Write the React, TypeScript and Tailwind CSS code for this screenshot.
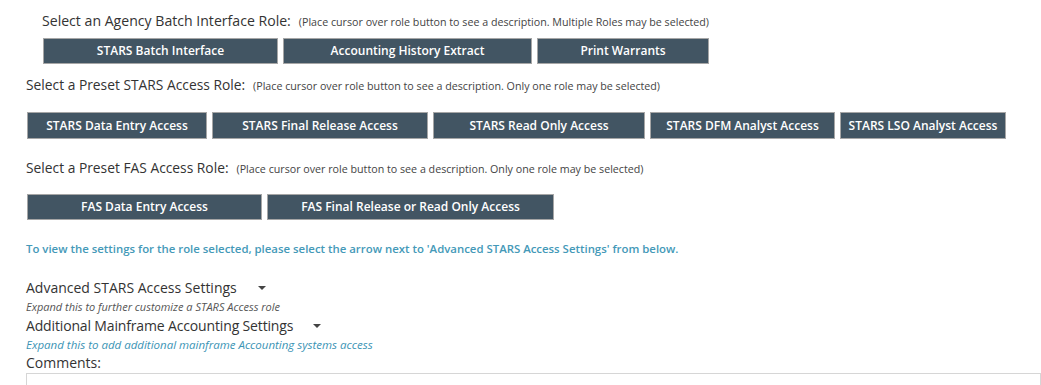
import React from "react";

const font = { fontFamily: '"Open Sans", "Noto Sans", sans-serif' };

function Btn({ label, w }: { label: string; w: string }) {
  return (
    <div
      className={`${w} h-full flex items-center justify-center bg-[#425563] border border-[#a6a6a6] text-white text-[12px] font-semibold`}
    >
      {label}
    </div>
  );
}

function Arrow() {
  return (
    <svg width="8" height="4" viewBox="0 0 8 4" className="inline-block">
      <path d="M0 0 L8 0 L4 4 Z" fill="#444" />
    </svg>
  );
}

function Heading({ title, note, pl, mt, size }: { title: string; note: string; pl: string; mt: string; size: string }) {
  return (
    <div className={`${pl} ${mt} h-[18px] flex items-baseline`}>
      <span className={`${size} leading-[18px]`}>{title}</span>
      <span className="text-[10.7px] leading-[18px] ml-[8px] text-[#444]">{note}</span>
    </div>
  );
}

export default function App() {
  return (
    <div className="w-[1041px] h-[385px] bg-white overflow-hidden text-[#333]" style={font}>
      <Heading
        pl="pl-[42px]"
        mt="mt-[12px]"
        size="text-[14.1px]"
        title="Select an Agency Batch Interface Role:"
        note="(Place cursor over role button to see a description. Multiple Roles may be selected)"
      />
      <div className="mt-[8px] ml-[43px] h-[26px] flex gap-[5px]">
        <Btn label="STARS Batch Interface" w="w-[235px]" />
        <Btn label="Accounting History Extract" w="w-[249px]" />
        <Btn label="Print Warrants" w="w-[172px]" />
      </div>
      <Heading
        pl="pl-[26px]"
        mt="mt-[12px]"
        size="text-[13.8px]"
        title="Select a Preset STARS Access Role:"
        note="(Place cursor over role button to see a description. Only one role may be selected)"
      />
      <div className="mt-[18px] ml-[27px] h-[27px] flex gap-[5px]">
        <Btn label="STARS Data Entry Access" w="w-[180px]" />
        <Btn label="STARS Final Release Access" w="w-[216px]" />
        <Btn label="STARS Read Only Access" w="w-[212px]" />
        <Btn label="STARS DFM Analyst Access" w="w-[185px]" />
        <Btn label="STARS LSO Analyst Access" w="w-[166px]" />
      </div>
      <Heading
        pl="pl-[26px]"
        mt="mt-[20px]"
        size="text-[13.8px]"
        title="Select a Preset FAS Access Role:"
        note="(Place cursor over role button to see a description. Only one role may be selected)"
      />
      <div className="mt-[17px] ml-[27px] h-[26px] flex gap-[5px]">
        <Btn label="FAS Data Entry Access" w="w-[235px]" />
        <Btn label="FAS Final Release or Read Only Access" w="w-[287px]" />
      </div>
      <div className="pl-[26px] mt-[21px] h-[16px] text-[11.4px] leading-[16px] font-semibold text-[#4499b8]">
        To view the settings for the role selected, please select the arrow next to 'Advanced STARS Access Settings' from below.
      </div>
      <div className="pl-[26px] mt-[22px] h-[18px] flex items-center">
        <span className="text-[14px] leading-[18px]">Advanced STARS Access Settings</span>
        <span className="ml-[21px] flex items-center"><Arrow /></span>
      </div>
      <div className="pl-[26px] mt-[2px] h-[16px] text-[11px] leading-[16px] italic text-[#555]">Expand this to further customize a STARS Access role</div>
      <div className="pl-[26px] mt-[2px] h-[18px] flex items-center">
        <span className="text-[14px] leading-[18px] tracking-[-0.15px]">Additional Mainframe Accounting Settings</span>
        <span className="ml-[20px] flex items-center"><Arrow /></span>
      </div>
      <div className="pl-[26px] mt-[2px] h-[17px] text-[11.5px] leading-[15px] italic text-[#3b94b5]">Expand this to add additional mainframe Accounting systems access</div>
      <div className="pl-[26px] h-[18px] text-[14px] leading-[18px]">Comments:</div>
      <div className="ml-[26px] mt-[1px] h-[40px] border border-[#d6d6d6]"></div>
    </div>
  );
}
